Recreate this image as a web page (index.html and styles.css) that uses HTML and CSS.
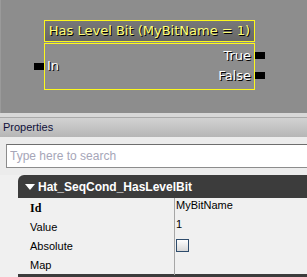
FILE: index.html
```html
<!DOCTYPE html>
<html lang="en">
<head>
    <meta charset="UTF-8">
    <title>Sequence Node</title>
    <link rel="stylesheet" href="styles.css">
</head>
<body>
    <!-- Graph canvas -->
    <div class="canvas">
        <div class="node">
            <div class="node-title">Has Level Bit (MyBitName = 1)</div>
            <div class="pins pins-left">
                <span class="pin"></span>
            </div>
            <div class="node-body">
                <div class="inputs"><span>In</span></div>
                <div class="outputs">
                    <span>True</span>
                    <span>False</span>
                </div>
            </div>
            <div class="pins pins-right">
                <span class="pin"></span>
                <span class="pin"></span>
            </div>
        </div>
    </div>

    <div class="splitter"></div>

    <!-- Properties panel -->
    <div class="panel-title">Properties</div>
    <div class="search-row">
        <input class="search" type="text" placeholder="Type here to search">
    </div>

    <div class="section">
        <div class="section-head">
            <span class="arrow"></span>
            <span>Hat_SeqCond_HasLevelBit</span>
        </div>
        <div class="prop-row">
            <div class="prop-name id-name">Id</div>
            <div class="prop-value">MyBitName</div>
        </div>
        <div class="prop-row">
            <div class="prop-name">Value</div>
            <div class="prop-value">1</div>
        </div>
        <div class="prop-row">
            <div class="prop-name">Absolute</div>
            <div class="prop-value"><span class="checkbox"></span></div>
        </div>
        <div class="prop-row">
            <div class="prop-name">Map</div>
            <div class="prop-value"></div>
        </div>
        <div class="section-foot"></div>
    </div>
</body>
</html>
```

FILE: styles.css
```css
body {
    margin: 0;
    width: 307px;
    height: 277px;
    overflow: hidden;
    background-color: #f0f0f0;
    font-family: "Liberation Sans", Arial, sans-serif;
    font-size: 11px;
    color: #000;
}
.canvas {
    height: 113px;
    box-sizing: border-box;
    padding: 20px 0 0 33px;
    background-color: #8d8d8d;
    border-left: 1px solid #9a9a9a;
}
.node {
    display: grid;
    grid-template-columns: 10px 211px 10px;
    grid-template-rows: 22px 47px;
    row-gap: 1px;
    font-family: "DejaVu Sans", Verdana, sans-serif;
    font-size: 13px;
    color: #fff;
    text-shadow: 1px 1px 0 #000;
}
.node-title {
    grid-column: 2;
    grid-row: 1;
    box-sizing: border-box;
    border: 1px solid #fcf81c;
    background: linear-gradient(#787878, #676767);
    color: #ffff78;
    text-align: center;
    line-height: 20px;
    white-space: nowrap;
}
.node-body {
    grid-column: 2;
    grid-row: 2;
    box-sizing: border-box;
    border: 1px solid #fcf81c;
    display: flex;
    justify-content: space-between;
    line-height: 20px;
}
.inputs {
    padding: 12px 0 0 2px;
}
.outputs {
    display: flex;
    flex-direction: column;
    align-items: flex-end;
    padding: 2px 3px 0 0;
}
.pins {
    grid-row: 2;
    display: flex;
    flex-direction: column;
}
.pins-left {
    grid-column: 1;
    padding-top: 20px;
}
.pins-right {
    grid-column: 3;
    padding-top: 9px;
    gap: 13px;
}
.pin {
    display: block;
    width: 10px;
    height: 7px;
    background-color: #000;
}
.splitter {
    height: 4px;
    background-color: #d8d8d8;
    border-bottom: 1px solid #a9a9a9;
}
.panel-title {
    height: 19px;
    line-height: 19px;
    padding-left: 3px;
    background: linear-gradient(#d2d2d2, #b6b6b6);
    color: #10103a;
}
.search-row {
    padding: 7px 0 7px 6px;
    background-color: #ececec;
}
.search {
    display: block;
    width: 100%;
    height: 24px;
    box-sizing: border-box;
    margin: 0;
    padding: 0 0 0 3px;
    border: 1px solid #8c8c8c;
    border-top-color: #6e6e6e;
    border-right: none;
    background-color: #fff;
    font-family: "Liberation Sans", Arial, sans-serif;
    font-size: 12px;
    outline: none;
}
.search::placeholder {
    color: #a6a6b8;
}
.section {
    margin-left: 18px;
}
.section-head {
    height: 23px;
    display: flex;
    align-items: center;
    gap: 3px;
    padding-left: 7px;
    background-color: #3c3c3c;
    border-top-left-radius: 6px;
    color: #fff;
    font-weight: bold;
    font-size: 12px;
}
.arrow {
    width: 0;
    height: 0;
    border-left: 5px solid transparent;
    border-right: 5px solid transparent;
    border-top: 6px solid #fff;
}
.prop-row {
    display: grid;
    grid-template-columns: 157px 1fr;
    height: 19px;
    line-height: 19px;
}
.prop-name {
    padding-left: 12px;
    border-right: 1px solid #a6a6a6;
    padding-top: 1px;
}
.id-name {
    font-family: "Liberation Serif", "Times New Roman", serif;
    font-weight: bold;
    font-size: 12px;
}
.prop-value {
    padding-left: 1px;
    line-height: 15px;
}
.checkbox {
    display: block;
    width: 13px;
    height: 13px;
    box-sizing: border-box;
    margin-top: 3px;
    border: 1px solid #2e4c6c;
    background: linear-gradient(#fefefe, #d8d8d8);
}
.section-foot {
    height: 4px;
    background-color: #3c3c3c;
}
```
